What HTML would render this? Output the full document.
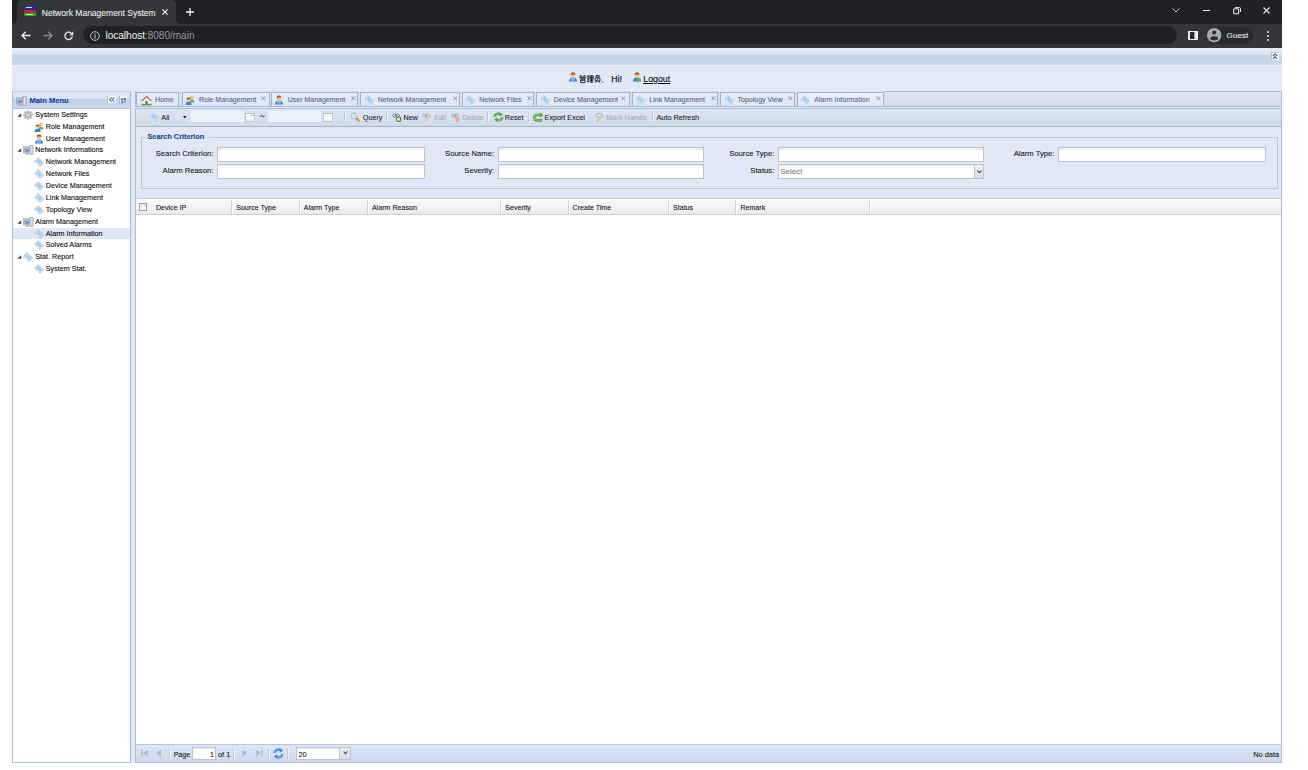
<!DOCTYPE html>
<html><head><meta charset="utf-8">
<style>
*{box-sizing:border-box}
html,body{margin:0;padding:0;background:#fff;width:1308px;height:770px;overflow:hidden;font-family:"Liberation Sans",sans-serif}
.a{position:absolute}
.t{position:absolute;white-space:nowrap;line-height:10px;height:10px;-webkit-text-stroke:0.08px currentColor}
svg{position:absolute;overflow:visible}
</style></head>
<body>
<svg width="0" height="0" style="position:absolute"><defs>
<g id="i-tag"><path d="M0.7 4.2L4.2 0.7L9.5 6L6 9.5Z" fill="#c4e2f8" stroke="#b9c5d4" stroke-width="1" stroke-linejoin="round"/><path d="M2.6 4.4L4.4 2.6L7.6 5.8L5.8 7.6Z" fill="#9ccdf0"/><path d="M2.2 5.2L5 8" stroke="#ffffff" stroke-width="0.8"/></g>
<g id="i-user"><path d="M1 9.5C1 6.8 2.6 5.6 5 5.6C7.4 5.6 9 6.8 9 9.5Z" fill="#3f7fd6"/><rect x="3" y="6" width="4" height="2.6" fill="#7fb3ea"/><circle cx="5" cy="3.2" r="2.3" fill="#f1c39b"/><path d="M2.6 3.1C2.6 1.2 3.6 0.6 5 0.6C6.4 0.6 7.4 1.2 7.4 3.1C6.6 2.4 3.4 2.4 2.6 3.1Z" fill="#b5521f"/></g>
<g id="i-role"><circle cx="6.8" cy="2.4" r="1.8" fill="#e8c07a"/><path d="M4.5 7.5C4.5 5.4 5.5 4.6 6.8 4.6C8.1 4.6 9.4 5.4 9.4 7.5Z" fill="#5db547"/><path d="M0.6 10C0.6 7.5 1.8 6.6 3.6 6.6C5.4 6.6 6.6 7.5 6.6 10Z" fill="#3f7fd6"/><circle cx="3.6" cy="4.8" r="2" fill="#f1c39b"/><path d="M1.6 4.7C1.6 3.2 2.4 2.6 3.6 2.6C4.8 2.6 5.6 3.2 5.6 4.7C4.9 4.1 2.3 4.1 1.6 4.7Z" fill="#8a5a2a"/></g>
<g id="i-pc"><rect x="0.5" y="1.8" width="7" height="6" fill="#d3d6db" stroke="#9da3ab" stroke-width="0.7"/><rect x="1.5" y="2.8" width="5" height="4" fill="#7594cc"/><rect x="1.5" y="2.8" width="5" height="1.2" fill="#a9c4ee"/><rect x="7" y="0.6" width="3" height="9" fill="#e2e4e7" stroke="#8f969e" stroke-width="0.7"/><rect x="2.4" y="8" width="3.4" height="1.6" fill="#a4aab2"/></g>
<g id="i-gear"><rect x="4.1" y="0.3" width="1.8" height="2.4" fill="#aeb2b8" transform="rotate(0 5 5)"/><rect x="4.1" y="0.3" width="1.8" height="2.4" fill="#aeb2b8" transform="rotate(45 5 5)"/><rect x="4.1" y="0.3" width="1.8" height="2.4" fill="#aeb2b8" transform="rotate(90 5 5)"/><rect x="4.1" y="0.3" width="1.8" height="2.4" fill="#aeb2b8" transform="rotate(135 5 5)"/><rect x="4.1" y="0.3" width="1.8" height="2.4" fill="#aeb2b8" transform="rotate(180 5 5)"/><rect x="4.1" y="0.3" width="1.8" height="2.4" fill="#aeb2b8" transform="rotate(225 5 5)"/><rect x="4.1" y="0.3" width="1.8" height="2.4" fill="#aeb2b8" transform="rotate(270 5 5)"/><rect x="4.1" y="0.3" width="1.8" height="2.4" fill="#aeb2b8" transform="rotate(315 5 5)"/><circle cx="5" cy="5" r="3.3" fill="#bfc3c8" stroke="#9ea3a9" stroke-width="0.5"/><circle cx="5" cy="5" r="1.5" fill="#f2f3f4" stroke="#9ea3a9" stroke-width="0.4"/></g>
<g id="i-home"><path d="M0.4 5.4L5.5 0.6L10.6 5.4L9.4 6.2L5.5 2.6L1.6 6.2Z" fill="#b3764a"/><path d="M2.4 5.6L5.5 2.8L8.6 5.6V9.4H2.4Z" fill="#faf6f0"/><rect x="4.3" y="6" width="2.4" height="3.4" fill="#707070"/><rect x="0.6" y="8.8" width="9.8" height="1.5" fill="#4a9e38"/></g>
<g id="i-role2"><path d="M1 9.5C1 6.8 2.6 5.6 5 5.6C7.4 5.6 9 6.8 9 9.5Z" fill="#3f7fd6"/><path d="M5 5.6C7.4 5.6 9.4 6.8 9.4 9.5H5Z" fill="#5db547"/><circle cx="5" cy="3.2" r="2.3" fill="#f1c39b"/><path d="M2.6 3.1C2.6 1.2 3.6 0.6 5 0.6C6.4 0.6 7.4 1.2 7.4 3.1C6.6 2.4 3.4 2.4 2.6 3.1Z" fill="#9a4a1a"/></g>
<g id="i-query"><circle cx="4" cy="4" r="3" fill="#cfe6fa" stroke="#9db4cc" stroke-width="0.8"/><path d="M6 6L9.4 9.2" stroke="#d98a3a" stroke-width="2"/></g>
<g id="i-new"><ellipse cx="2.6" cy="3.6" rx="2" ry="1.5" fill="none" stroke="#6b6f75" stroke-width="0.9"/><ellipse cx="5.4" cy="3.6" rx="2" ry="1.5" fill="none" stroke="#6b6f75" stroke-width="0.9"/><circle cx="6.6" cy="7.2" r="2.2" fill="#e8f6e0" stroke="#3f8f2e" stroke-width="1.2"/></g>
<g id="i-edit" opacity="0.5"><ellipse cx="2.6" cy="3.6" rx="2" ry="1.5" fill="none" stroke="#6b6f75" stroke-width="0.9"/><ellipse cx="5.4" cy="3.6" rx="2" ry="1.5" fill="none" stroke="#6b6f75" stroke-width="0.9"/><path d="M3 9.4L8.8 3.4" stroke="#e2c43c" stroke-width="2"/></g>
<g id="i-del" opacity="0.6"><ellipse cx="2.6" cy="3.6" rx="2" ry="1.5" fill="none" stroke="#6b6f75" stroke-width="0.9"/><ellipse cx="5.4" cy="3.6" rx="2" ry="1.5" fill="none" stroke="#6b6f75" stroke-width="0.9"/><circle cx="6.4" cy="7.4" r="2.2" fill="#f0884a"/></g>
<g id="i-reset"><path d="M1.4 4.8C1.8 2.2 4.6 1 7.6 2.4" stroke="#3f8a2e" stroke-width="2.4" fill="none"/><path d="M1.4 4.8C1.8 2.2 4.6 1 7.6 2.4" stroke="#8cc870" stroke-width="1.2" fill="none"/><path d="M6.4 0.2L9.8 2.6L6.6 4.6Z" fill="#5aa43e"/><path d="M9.4 5.4C9 8 6.2 9.2 3.2 7.8" stroke="#3f8a2e" stroke-width="2.4" fill="none"/><path d="M9.4 5.4C9 8 6.2 9.2 3.2 7.8" stroke="#8cc870" stroke-width="1.2" fill="none"/><path d="M4.4 10L1 7.6L4.2 5.6Z" fill="#5aa43e"/></g>
<g id="i-export"><path d="M8.6 3H4A2.6 2.6 0 0 0 4 8.2H9.4" stroke="#3f8a2e" stroke-width="2.6" fill="none"/><path d="M8.6 3H4A2.6 2.6 0 0 0 4 8.2H9.4" stroke="#8cc870" stroke-width="1.3" fill="none"/><path d="M6.8 0.2L10.4 3L6.8 5.6Z" fill="#5aa43e"/></g>
<g id="i-mark" opacity="0.5"><ellipse cx="4.4" cy="3.4" rx="3.6" ry="2" fill="none" stroke="#7a7a7a" stroke-width="0.9"/><path d="M1.6 9.4L8 4" stroke="#d8b830" stroke-width="2"/></g>
<g id="i-refresh"><path d="M1.6 5C1.8 2.4 4.6 0.8 7.8 2.2" stroke="#2f6fcf" stroke-width="2.2" fill="none"/><path d="M1.6 5C1.8 2.4 4.6 0.8 7.8 2.2" stroke="#8fc0f4" stroke-width="1" fill="none"/><path d="M6.6 0L10.2 2.4L7 4.6Z" fill="#3f86e0"/><path d="M9.4 6C9.2 8.6 6.4 10.2 3.2 8.8" stroke="#2f6fcf" stroke-width="2.2" fill="none"/><path d="M9.4 6C9.2 8.6 6.4 10.2 3.2 8.8" stroke="#8fc0f4" stroke-width="1" fill="none"/><path d="M4.4 11L0.8 8.6L4 6.4Z" fill="#3f86e0"/></g>
</defs></svg>
<!-- ============ BROWSER CHROME ============ -->
<div class="a" style="left:12px;top:0;width:1270px;height:24px;background:#202124"></div>
<!-- active tab -->
<div class="a" style="left:17px;top:0px;width:159px;height:24px;background:#35363a;border-radius:5px 5px 0 0"></div>
<div class="a" style="left:12px;top:16px;width:5px;height:8px;background:#35363a"></div>
<div class="a" style="left:12px;top:16px;width:5px;height:8px;background:#202124;border-radius:0 0 5px 0"></div>
<div class="a" style="left:176px;top:16px;width:5px;height:8px;background:#35363a"></div>
<div class="a" style="left:176px;top:16px;width:5px;height:8px;background:#202124;border-radius:0 0 0 5px"></div>
<!-- favicon -->
<div class="a" style="left:24px;top:6px;width:12px;height:3px;background:#2626c8"></div>
<div class="a" style="left:26px;top:7px;width:6px;height:1px;background:#d8d8ff"></div>
<div class="a" style="left:24px;top:9.5px;width:12px;height:3px;background:#c0202a"></div>
<div class="a" style="left:24px;top:13px;width:12px;height:3px;background:#1fa52e"></div>
<div class="a" style="left:26px;top:14px;width:7px;height:1px;background:#b8ffb8"></div>
<div class="t" style="left:41.8px;top:8.1px;font-size:8.5px;color:#eceef0">Network Management System</div>
<svg style="left:162.2px;top:9.2px" width="6" height="6"><path d="M0.4 0.4L5.6 5.6M5.6 0.4L0.4 5.6" stroke="#f0f1f3" stroke-width="1.2"/></svg>
<svg style="left:186px;top:8px" width="8" height="8"><path d="M4 0V8M0 4H8" stroke="#f4f5f6" stroke-width="1.3"/></svg>
<!-- window buttons -->
<svg style="left:1172px;top:8px" width="8" height="5"><path d="M0.5 0.5L4 4L7.5 0.5" stroke="#c8c9cc" stroke-width="0.9" fill="none"/></svg>
<div class="a" style="left:1203px;top:10px;width:7px;height:1.2px;background:#e8eaed"></div>
<svg style="left:1233px;top:7px" width="8" height="7"><rect x="0.7" y="1.7" width="5" height="5" rx="1" stroke="#e8eaed" stroke-width="1.1" fill="none"/><path d="M2 0.6H6.5a1 1 0 0 1 1 1V5" stroke="#e8eaed" stroke-width="1" fill="none"/></svg>
<svg style="left:1263px;top:7px" width="7" height="7"><path d="M0.5 0.5L6.5 6.5M6.5 0.5L0.5 6.5" stroke="#e8eaed" stroke-width="1.1"/></svg>

<!-- toolbar -->
<div class="a" style="left:12px;top:24px;width:1270px;height:24px;background:#35363a"></div>
<svg style="left:21px;top:31px" width="10" height="9"><path d="M9.5 4.5H1M4.8 0.7L1 4.5L4.8 8.3" stroke="#e8eaed" stroke-width="1.3" fill="none"/></svg>
<svg style="left:43px;top:31px" width="10" height="9"><path d="M0.5 4.5H9M5.2 0.7L9 4.5L5.2 8.3" stroke="#8a8b8e" stroke-width="1.3" fill="none"/></svg>
<svg style="left:64px;top:31px" width="10" height="10"><path d="M8.3 5.2A3.7 3.7 0 1 1 7.2 2.2" stroke="#e8eaed" stroke-width="1.4" fill="none"/><path d="M9.3 0.3V4.2H5.4Z" fill="#e8eaed"/></svg>
<div class="a" style="left:83px;top:26px;width:1094px;height:18px;background:#202124;border-radius:9px"></div>
<svg style="left:90px;top:30.5px" width="10" height="10"><circle cx="5" cy="5" r="4.3" stroke="#c4c6ca" stroke-width="1" fill="none"/><rect x="4.4" y="4.2" width="1.2" height="3.3" fill="#c4c6ca"/><rect x="4.4" y="2.4" width="1.2" height="1.1" fill="#c4c6ca"/></svg>
<div class="t" style="left:105.5px;top:30.5px;font-size:10px;color:#e8eaed">localhost<span style="color:#8f9297">:8080/main</span></div>
<!-- right toolbar icons -->
<div class="a" style="left:1188px;top:30.9px;width:9.8px;height:9.1px;border:solid #eceef0;border-width:1.2px 3.3px 1.3px 2px;background:#2a2b2e"></div>
<div class="a" style="left:1194.2px;top:32px;width:0.6px;height:7px;background:#9a9b9e"></div>
<div class="a" style="left:1210px;top:27px;width:43px;height:17px;background:#292a2d;border-radius:0 8px 8px 0"></div>
<svg style="left:1206.8px;top:28px" width="15" height="15"><circle cx="7.2" cy="7.2" r="7.2" fill="#a8aaad"/><circle cx="7.2" cy="4.4" r="2" fill="#2a2b2e"/><ellipse cx="7.2" cy="10.2" rx="3.9" ry="2" fill="#2a2b2e"/></svg>
<div class="t" style="left:1226.6px;top:31px;font-size:8.1px;color:#e8eaed">Guest</div>
<div class="a" style="left:1267px;top:31px;width:2px;height:2px;background:#e8eaed;border-radius:1px"></div>
<div class="a" style="left:1267px;top:35px;width:2px;height:2px;background:#e8eaed;border-radius:1px"></div>
<div class="a" style="left:1267px;top:39px;width:2px;height:2px;background:#e8eaed;border-radius:1px"></div>

<!-- ============ PAGE ============ -->
<div id="page" class="a" style="left:12px;top:48px;width:1270px;height:715px;background:#e2e8f5;overflow:hidden"></div>
<!-- north collapsed header band -->
<div class="a" style="left:12px;top:48px;width:1270px;height:7px;background:linear-gradient(#e6edf7,#d6e1f1)"></div>
<div class="a" style="left:12px;top:55px;width:1270px;height:10px;background:linear-gradient(#c2d2e8,#c9d8ec)"></div>
<div class="a" style="left:12px;top:65px;width:1270px;height:1px;background:#e9eff8"></div>
<div class="a" style="left:1270.5px;top:52px;width:8.5px;height:8px;background:#f2f6fc;border-left:1px solid #aebfd8;border-top:1px solid #b9cbe3"></div>
<svg style="left:1272px;top:53.2px" width="6" height="7"><path d="M0.8 3L3 1L5.2 3M0.8 5.8L3 3.8L5.2 5.8" stroke="#56637a" stroke-width="1.1" fill="none"/></svg>
<!-- user greeting -->
<svg style="left:567.5px;top:71.5px" width="10" height="11"><use href="#i-user"/></svg>
<svg style="left:579px;top:74.5px" width="28" height="8" viewBox="0 0 28 8"><g fill="none" stroke="#262626" stroke-width="0.95">
<path d="M0.8 1.6L2 0.3M0.8 1H3.2M4.4 1.6L5.6 0.3M4.4 1H6.8"/><path d="M0.6 3.2V2.3H6.8V3.2"/><path d="M2 3.2H5.6V5H2ZM1.6 5H6V7.6H1.6Z"/>
<path d="M8 1H10.4M8 3.8H10.4M7.8 6.8L10.6 6M9.2 1V6.4"/><path d="M11 0.8H14.2V4.2H11ZM11 2.5H14.2M12.6 0.8V7.2M11 5.4H14.2M10.8 7.2H14.6"/>
<path d="M17 0.6H20.2V2.2H17Z"/><path d="M16.2 3H21V6H16.2Z"/><path d="M18.6 3.4V5.2L16.2 7.6M19 6.2L21.2 7.6"/>
<path d="M23.2 6.4L23.8 7.6"/></g></svg>
<div class="t" style="left:611.3px;top:73.6px;font-size:8.6px;color:#121e40;-webkit-text-stroke:0.25px #121e40">Hi!</div>
<svg style="left:632px;top:71.5px" width="10" height="11"><use href="#i-role2"/></svg>
<div class="t" style="left:643.3px;top:73.5px;font-size:8.8px;color:#000;text-decoration:underline">Logout</div>

<!-- ============ WEST PANEL ============ -->
<div class="a" style="left:12px;top:91px;width:119px;height:672px;border:1px solid #a8bdd9;border-top-color:#bfcde0;background:#fff"></div>
<div class="a" style="left:13px;top:92px;width:117px;height:17px;background:linear-gradient(#e0e9f6 0%,#d6e2f3 42%,#c0d1ea 46%,#c9d8ed 100%);border-bottom:1px solid #b6c5d8"></div>
<svg style="left:16px;top:95.8px" width="11" height="10"><use href="#i-pc"/></svg>
<div class="t" style="left:29.5px;top:95.5px;font-size:7.6px;font-weight:bold;color:#15428b">Main Menu</div>
<div class="a" style="left:107.2px;top:96px;width:8.7px;height:8px;background:#f5f9fe;border-left:1px solid #a9b9cf;border-bottom:1px solid #c3d1e3"></div>
<svg style="left:109px;top:97.2px" width="6" height="6"><path d="M2.8 0.4L0.6 2.6L2.8 4.8M5.4 0.4L3.2 2.6L5.4 4.8" stroke="#5a6f8e" stroke-width="1.1" fill="none"/></svg>
<div class="a" style="left:118.8px;top:96px;width:8.2px;height:8px;background:#f5f9fe;border-left:1px solid #a9b9cf;border-bottom:1px solid #c3d1e3"></div>
<svg style="left:120px;top:97px" width="7" height="7"><path d="M1.2 3.6V2.1H4.6" stroke="#5a6f8e" stroke-width="1.1" fill="none"/><path d="M4.2 0.2L6.6 2.1L4.2 4Z" fill="#5a6f8e"/><path d="M5.8 3.4V5H2.6" stroke="#5a6f8e" stroke-width="1.1" fill="none"/><path d="M3 3.1L0.6 5L3 6.9Z" fill="#5a6f8e"/></svg>
<svg style="left:16.5px;top:112.7px" width="5" height="4"><path d="M4.2 0.2V3.8H0.4Z" fill="#3d3d3d"/></svg>
<svg style="left:23.3px;top:109.7px" width="11" height="11"><use href="#i-gear"/></svg>
<div class="t" style="left:35.3px;top:109.7px;font-size:7.2px;color:#000">System Settings</div>
<svg style="left:34.2px;top:121.6px" width="11" height="11"><use href="#i-role"/></svg>
<div class="t" style="left:45.8px;top:121.6px;font-size:7.2px;color:#000">Role Management</div>
<svg style="left:34.2px;top:133.5px" width="11" height="11"><use href="#i-user"/></svg>
<div class="t" style="left:45.8px;top:133.5px;font-size:7.2px;color:#000">User Management</div>
<svg style="left:16.5px;top:148.3px" width="5" height="4"><path d="M4.2 0.2V3.8H0.4Z" fill="#3d3d3d"/></svg>
<svg style="left:23.3px;top:145.3px" width="11" height="11"><use href="#i-pc"/></svg>
<div class="t" style="left:35.3px;top:145.3px;font-size:7.2px;color:#000">Network Informations</div>
<svg style="left:34.2px;top:157.2px" width="11" height="11"><use href="#i-tag"/></svg>
<div class="t" style="left:45.8px;top:157.2px;font-size:7.2px;color:#000">Network Management</div>
<svg style="left:34.2px;top:169.1px" width="11" height="11"><use href="#i-tag"/></svg>
<div class="t" style="left:45.8px;top:169.1px;font-size:7.2px;color:#000">Network Files</div>
<svg style="left:34.2px;top:181.0px" width="11" height="11"><use href="#i-tag"/></svg>
<div class="t" style="left:45.8px;top:181.0px;font-size:7.2px;color:#000">Device Management</div>
<svg style="left:34.2px;top:192.9px" width="11" height="11"><use href="#i-tag"/></svg>
<div class="t" style="left:45.8px;top:192.9px;font-size:7.2px;color:#000">Link Management</div>
<svg style="left:34.2px;top:204.7px" width="11" height="11"><use href="#i-tag"/></svg>
<div class="t" style="left:45.8px;top:204.7px;font-size:7.2px;color:#000">Topology View</div>
<svg style="left:16.5px;top:219.6px" width="5" height="4"><path d="M4.2 0.2V3.8H0.4Z" fill="#3d3d3d"/></svg>
<svg style="left:23.3px;top:216.6px" width="11" height="11"><use href="#i-pc"/></svg>
<div class="t" style="left:35.3px;top:216.6px;font-size:7.2px;color:#000">Alarm Management</div>
<div class="a" style="left:13px;top:228.3px;width:117px;height:11px;background:#dfe7f5"></div>
<svg style="left:34.2px;top:228.5px" width="11" height="11"><use href="#i-tag"/></svg>
<div class="t" style="left:45.8px;top:228.5px;font-size:7.2px;color:#000">Alarm Information</div>
<svg style="left:34.2px;top:240.4px" width="11" height="11"><use href="#i-tag"/></svg>
<div class="t" style="left:45.8px;top:240.4px;font-size:7.2px;color:#000">Solved Alarms</div>
<svg style="left:16.5px;top:255.3px" width="5" height="4"><path d="M4.2 0.2V3.8H0.4Z" fill="#3d3d3d"/></svg>
<svg style="left:23.3px;top:252.3px" width="11" height="11"><use href="#i-tag"/></svg>
<div class="t" style="left:35.3px;top:252.3px;font-size:7.2px;color:#000">Stat. Report</div>
<svg style="left:34.2px;top:264.1px" width="11" height="11"><use href="#i-tag"/></svg>
<div class="t" style="left:45.8px;top:264.1px;font-size:7.2px;color:#000">System Stat.</div>
<!-- ============ CENTER ============ -->
<div class="a" style="left:135px;top:91px;width:147px;height:671px"></div>
<div class="a" style="left:135px;top:91px;width:1147px;height:18px;background:linear-gradient(#dbe4f0,#d0dbea);border:1px solid #a8bdd9;border-top:none;border-bottom:none"></div><div class="a" style="left:884px;top:91px;width:398px;height:1px;background:#b3bfce"></div>
<div class="a" style="left:135px;top:106px;width:1147px;height:1px;background:#9fb8da"></div>
<div class="a" style="left:135px;top:107px;width:1147px;height:1px;background:#e6eef9"></div>
<div class="a" style="left:135px;top:108px;width:1147px;height:1px;background:#adbadb"></div>
<div class="a" style="left:136.4px;top:92.3px;width:43.1px;height:13.9px;background:linear-gradient(#e4ecf7,#dce6f4);border:1px solid #a4b6cf;border-top:1px solid #a9bbd4;border-bottom:none"></div>
<svg style="left:140.9px;top:94.5px" width="11" height="11"><use href="#i-home"/></svg>
<div class="t" style="left:154.9px;top:94.5px;font-size:7.0px;color:#52647e">Home</div>
<div class="a" style="left:181.5px;top:92.3px;width:88.5px;height:13.9px;background:linear-gradient(#e4ecf7,#dce6f4);border:1px solid #a4b6cf;border-top:1px solid #a9bbd4;border-bottom:none"></div>
<svg style="left:185.0px;top:94.5px" width="11" height="11"><use href="#i-role"/></svg>
<div class="t" style="left:199px;top:94.5px;font-size:7.0px;color:#52647e">Role Management</div>
<svg style="left:261.4px;top:95.5px" width="5" height="5"><path d="M0.6 0.6L4.2 4.2M4.2 0.6L0.6 4.2" stroke="#7e8999" stroke-width="1"/></svg>
<div class="a" style="left:271.0px;top:92.3px;width:87.4px;height:13.9px;background:linear-gradient(#e4ecf7,#dce6f4);border:1px solid #a4b6cf;border-top:1px solid #a9bbd4;border-bottom:none"></div>
<svg style="left:273.7px;top:94.5px" width="11" height="11"><use href="#i-user"/></svg>
<div class="t" style="left:287.7px;top:94.5px;font-size:7.0px;color:#52647e">User Management</div>
<svg style="left:350.7px;top:95.5px" width="5" height="5"><path d="M0.6 0.6L4.2 4.2M4.2 0.6L0.6 4.2" stroke="#7e8999" stroke-width="1"/></svg>
<div class="a" style="left:360.4px;top:92.3px;width:100.0px;height:13.9px;background:linear-gradient(#e4ecf7,#dce6f4);border:1px solid #a4b6cf;border-top:1px solid #a9bbd4;border-bottom:none"></div>
<svg style="left:363.8px;top:94.5px" width="11" height="11"><use href="#i-tag"/></svg>
<div class="t" style="left:377.8px;top:94.5px;font-size:7.0px;color:#52647e">Network Management</div>
<svg style="left:452.7px;top:95.5px" width="5" height="5"><path d="M0.6 0.6L4.2 4.2M4.2 0.6L0.6 4.2" stroke="#7e8999" stroke-width="1"/></svg>
<div class="a" style="left:462.4px;top:92.3px;width:71.8px;height:13.9px;background:linear-gradient(#e4ecf7,#dce6f4);border:1px solid #a4b6cf;border-top:1px solid #a9bbd4;border-bottom:none"></div>
<svg style="left:465.2px;top:94.5px" width="11" height="11"><use href="#i-tag"/></svg>
<div class="t" style="left:479.2px;top:94.5px;font-size:7.0px;color:#52647e">Network Files</div>
<svg style="left:527.4px;top:95.5px" width="5" height="5"><path d="M0.6 0.6L4.2 4.2M4.2 0.6L0.6 4.2" stroke="#7e8999" stroke-width="1"/></svg>
<div class="a" style="left:536.0px;top:92.3px;width:94.2px;height:13.9px;background:linear-gradient(#e4ecf7,#dce6f4);border:1px solid #a4b6cf;border-top:1px solid #a9bbd4;border-bottom:none"></div>
<svg style="left:539.7px;top:94.5px" width="11" height="11"><use href="#i-tag"/></svg>
<div class="t" style="left:553.7px;top:94.5px;font-size:7.0px;color:#52647e">Device Management</div>
<svg style="left:621.4px;top:95.5px" width="5" height="5"><path d="M0.6 0.6L4.2 4.2M4.2 0.6L0.6 4.2" stroke="#7e8999" stroke-width="1"/></svg>
<div class="a" style="left:632.1px;top:92.3px;width:85.7px;height:13.9px;background:linear-gradient(#e4ecf7,#dce6f4);border:1px solid #a4b6cf;border-top:1px solid #a9bbd4;border-bottom:none"></div>
<svg style="left:635.3px;top:94.5px" width="11" height="11"><use href="#i-tag"/></svg>
<div class="t" style="left:649.3px;top:94.5px;font-size:7.0px;color:#52647e">Link Management</div>
<svg style="left:710.7px;top:95.5px" width="5" height="5"><path d="M0.6 0.6L4.2 4.2M4.2 0.6L0.6 4.2" stroke="#7e8999" stroke-width="1"/></svg>
<div class="a" style="left:720.0px;top:92.3px;width:74.9px;height:13.9px;background:linear-gradient(#e4ecf7,#dce6f4);border:1px solid #a4b6cf;border-top:1px solid #a9bbd4;border-bottom:none"></div>
<svg style="left:723.5px;top:94.5px" width="11" height="11"><use href="#i-tag"/></svg>
<div class="t" style="left:737.5px;top:94.5px;font-size:7.0px;color:#52647e">Topology View</div>
<svg style="left:788.0px;top:95.5px" width="5" height="5"><path d="M0.6 0.6L4.2 4.2M4.2 0.6L0.6 4.2" stroke="#7e8999" stroke-width="1"/></svg>
<div class="a" style="left:797.2px;top:92.3px;width:87.2px;height:13.9px;background:linear-gradient(#eaf1fb,#dfe9f7);border:1px solid #a4b6cf;border-top:1px solid #97b2d8;border-bottom:none"></div>
<svg style="left:800.3px;top:94.5px" width="11" height="11"><use href="#i-tag"/></svg>
<div class="t" style="left:814.3px;top:94.5px;font-size:7.0px;color:#52647e">Alarm Information</div>
<svg style="left:876.4px;top:95.5px" width="5" height="5"><path d="M0.6 0.6L4.2 4.2M4.2 0.6L0.6 4.2" stroke="#7e8999" stroke-width="1"/></svg>
<div class="a" style="left:135px;top:109px;width:1147px;height:18px;background:linear-gradient(#dce6f3,#d0dcea);border-left:1px solid #a8bdd9;border-right:1px solid #a8bdd9;border-bottom:1px solid #aab5c4"></div>
<svg style="left:148.5px;top:111.8px" width="11" height="11"><use href="#i-tag"/></svg>
<div class="t" style="left:161.3px;top:112.8px;font-size:7.4px;color:#222">All</div>
<svg style="left:183px;top:116px" width="4" height="3"><path d="M0 0H3.6L1.8 2.4Z" fill="#222"/></svg>
<div class="a" style="left:190.8px;top:110.8px;width:53.5px;height:11px;background:#edf2f9"></div>
<div class="a" style="left:245.3px;top:112.6px;width:10px;height:9px;background:linear-gradient(#f8f9fb 60%,#e4efe4);border:1px solid #c4c8cf;border-top:1.5px solid #b8bdc5"></div>
<div class="a" style="left:267.8px;top:110.8px;width:53.7px;height:11px;background:#edf2f9"></div>
<div class="a" style="left:322.5px;top:112.6px;width:10px;height:9px;background:linear-gradient(#f8f9fb 60%,#e4efe4);border:1px solid #c4c8cf;border-top:1.5px solid #b8bdc5"></div>
<div class="a" style="left:251px;top:114.8px;width:0.8px;height:1.6px;background:#d57a84"></div><div class="a" style="left:253px;top:114.8px;width:0.8px;height:1.6px;background:#d57a84"></div>
<svg style="left:260px;top:114.5px" width="5" height="3"><path d="M0.3 1.6C1 0.4 1.8 0.4 2.5 1.2C3.2 2 4 2 4.7 0.8" stroke="#222" stroke-width="1" fill="none"/></svg>
<div class="a" style="left:344.1px;top:112px;width:1px;height:10px;background:#b9c8dc"></div><div class="a" style="left:345.1px;top:112px;width:1px;height:10px;background:#f2f6fb"></div>
<div class="a" style="left:386.3px;top:112px;width:1px;height:10px;background:#b9c8dc"></div><div class="a" style="left:387.3px;top:112px;width:1px;height:10px;background:#f2f6fb"></div>
<div class="a" style="left:487.1px;top:112px;width:1px;height:10px;background:#b9c8dc"></div><div class="a" style="left:488.1px;top:112px;width:1px;height:10px;background:#f2f6fb"></div>
<div class="a" style="left:527.5px;top:112px;width:1px;height:10px;background:#b9c8dc"></div><div class="a" style="left:528.5px;top:112px;width:1px;height:10px;background:#f2f6fb"></div>
<div class="a" style="left:652.0px;top:112px;width:1px;height:10px;background:#b9c8dc"></div><div class="a" style="left:653.0px;top:112px;width:1px;height:10px;background:#f2f6fb"></div>
<svg style="left:350px;top:112px" width="11" height="10"><use href="#i-query"/></svg>
<div class="t" style="left:362.8px;top:112.8px;font-size:7.2px;color:#1a1a1a">Query</div>
<svg style="left:392px;top:112px" width="11" height="10"><use href="#i-new"/></svg>
<div class="t" style="left:403.6px;top:112.8px;font-size:7.2px;color:#1a1a1a">New</div>
<svg style="left:422px;top:112px" width="11" height="10"><use href="#i-edit"/></svg>
<div class="t" style="left:434px;top:112.8px;font-size:7.2px;color:#a3acb8">Edit</div>
<svg style="left:451px;top:112px" width="11" height="10"><use href="#i-del"/></svg>
<div class="t" style="left:462.5px;top:112.8px;font-size:7.2px;color:#a3acb8">Delete</div>
<svg style="left:492.5px;top:112px" width="11" height="10"><use href="#i-reset"/></svg>
<div class="t" style="left:504.8px;top:112.8px;font-size:7.2px;color:#1a1a1a">Reset</div>
<svg style="left:533px;top:112px" width="11" height="10"><use href="#i-export"/></svg>
<div class="t" style="left:544.6px;top:112.8px;font-size:7.2px;color:#1a1a1a">Export Excel</div>
<svg style="left:595px;top:112px" width="11" height="10"><use href="#i-mark"/></svg>
<div class="t" style="left:606.6px;top:112.8px;font-size:7.2px;color:#a3acb8">Mark Handle</div>
<div class="t" style="left:656.5px;top:112.8px;font-size:7.3px;color:#1a1a1a">Auto Refresh</div>
<div class="a" style="left:135px;top:127px;width:1147px;height:72px;background:#e1e7f5;border-left:1px solid #a8bdd9;border-right:1px solid #a8bdd9"></div>
<div class="a" style="left:140.5px;top:136.5px;width:1137px;height:52px;border:1px solid #bfc7d6"></div>
<div class="a" style="left:145px;top:132px;width:64px;height:9px;background:#e1e7f5"></div>
<div class="t" style="left:147.5px;top:131.5px;font-size:7.3px;font-weight:bold;color:#15428b">Search Criterion</div>
<div class="t" style="left:93.4px;width:120px;text-align:right;top:149.4px;font-size:7.7px;color:#111">Search Criterion:</div>
<div class="a" style="left:217px;top:147.3px;width:207.5px;height:14.3px;background:#fff linear-gradient(#e9ecef,#fff 3px);border:1px solid #bfc3cc"></div>
<div class="t" style="left:374.2px;width:120px;text-align:right;top:149.4px;font-size:7.7px;color:#111">Source Name:</div>
<div class="a" style="left:497.7px;top:147.3px;width:206.7px;height:14.3px;background:#fff linear-gradient(#e9ecef,#fff 3px);border:1px solid #bfc3cc"></div>
<div class="t" style="left:654.3px;width:120px;text-align:right;top:149.4px;font-size:7.7px;color:#111">Source Type:</div>
<div class="a" style="left:778.2px;top:147.3px;width:206.3px;height:14.3px;background:#fff linear-gradient(#e9ecef,#fff 3px);border:1px solid #bfc3cc"></div>
<div class="t" style="left:934.5px;width:120px;text-align:right;top:149.4px;font-size:7.7px;color:#111">Alarm Type:</div>
<div class="a" style="left:1058.2px;top:147.3px;width:207.4px;height:14.3px;background:#fff linear-gradient(#e9ecef,#fff 3px);border:1px solid #bfc3cc"></div>
<div class="t" style="left:93.4px;width:120px;text-align:right;top:166.1px;font-size:7.7px;color:#111">Alarm Reason:</div>
<div class="a" style="left:217px;top:164.3px;width:207.5px;height:14.3px;background:#fff linear-gradient(#e9ecef,#fff 3px);border:1px solid #bfc3cc"></div>
<div class="t" style="left:374.2px;width:120px;text-align:right;top:166.1px;font-size:7.7px;color:#111">Severity:</div>
<div class="a" style="left:497.7px;top:164.3px;width:206.7px;height:14.3px;background:#fff linear-gradient(#e9ecef,#fff 3px);border:1px solid #bfc3cc"></div>
<div class="t" style="left:654.3px;width:120px;text-align:right;top:166.1px;font-size:7.7px;color:#111">Status:</div>
<div class="a" style="left:778.2px;top:164.3px;width:206.3px;height:14.3px;background:#fff linear-gradient(#e9ecef,#fff 3px);border:1px solid #bfc3cc"></div>
<div class="t" style="left:780.2px;top:166.6px;font-size:8px;color:#7d7d7d">Select</div>
<div class="a" style="left:973.6px;top:164.3px;width:10.9px;height:14.3px;background:linear-gradient(#eef0f3,#d7dade);border:1px solid #bfc3cc"></div>
<svg style="left:976.6px;top:169.5px" width="5" height="4"><path d="M0.5 0.5L2.5 2.7L4.5 0.5" stroke="#3a3f6a" stroke-width="1.1" fill="none"/></svg>
<div class="a" style="left:135px;top:198.5px;width:1147px;height:546px;background:#fff;border:1px solid #a8bdd9;border-top:none;border-bottom:none"></div>
<div class="a" style="left:136px;top:198px;width:1145px;height:16.5px;background:linear-gradient(#fbfbfb,#f3f3f3 50%,#e9e9ea);border-top:1px solid #c9cfdb;border-bottom:1px solid #d0d0d0"></div>
<div class="a" style="left:139.3px;top:203.3px;width:8px;height:8px;background:linear-gradient(#e6e6e6,#fafafa);border:1px solid #9aa0a8"></div>
<div class="t" style="left:155.9px;top:202.5px;font-size:7.1px;color:#111">Device IP</div>
<div class="t" style="left:236.2px;top:202.5px;font-size:7.1px;color:#111">Source Type</div>
<div class="t" style="left:303.7px;top:202.5px;font-size:7.1px;color:#111">Alarm Type</div>
<div class="t" style="left:371.9px;top:202.5px;font-size:7.1px;color:#111">Alarm Reason</div>
<div class="t" style="left:505.3px;top:202.5px;font-size:7.1px;color:#111">Severity</div>
<div class="t" style="left:572.6px;top:202.5px;font-size:7.1px;color:#111">Create Time</div>
<div class="t" style="left:673px;top:202.5px;font-size:7.1px;color:#111">Status</div>
<div class="t" style="left:740.4px;top:202.5px;font-size:7.1px;color:#111">Remark</div>
<div class="a" style="left:230.9px;top:199.5px;width:1px;height:14px;background:#d4d4d4"></div><div class="a" style="left:231.9px;top:199.5px;width:1px;height:14px;background:#fdfdfd"></div>
<div class="a" style="left:298.8px;top:199.5px;width:1px;height:14px;background:#d4d4d4"></div><div class="a" style="left:299.8px;top:199.5px;width:1px;height:14px;background:#fdfdfd"></div>
<div class="a" style="left:366.8px;top:199.5px;width:1px;height:14px;background:#d4d4d4"></div><div class="a" style="left:367.8px;top:199.5px;width:1px;height:14px;background:#fdfdfd"></div>
<div class="a" style="left:500.0px;top:199.5px;width:1px;height:14px;background:#d4d4d4"></div><div class="a" style="left:501.0px;top:199.5px;width:1px;height:14px;background:#fdfdfd"></div>
<div class="a" style="left:567.9px;top:199.5px;width:1px;height:14px;background:#d4d4d4"></div><div class="a" style="left:568.9px;top:199.5px;width:1px;height:14px;background:#fdfdfd"></div>
<div class="a" style="left:667.8px;top:199.5px;width:1px;height:14px;background:#d4d4d4"></div><div class="a" style="left:668.8px;top:199.5px;width:1px;height:14px;background:#fdfdfd"></div>
<div class="a" style="left:734.8px;top:199.5px;width:1px;height:14px;background:#d4d4d4"></div><div class="a" style="left:735.8px;top:199.5px;width:1px;height:14px;background:#fdfdfd"></div>
<div class="a" style="left:869.0px;top:199.5px;width:1px;height:14px;background:#d4d4d4"></div><div class="a" style="left:870.0px;top:199.5px;width:1px;height:14px;background:#fdfdfd"></div>
<div class="a" style="left:135px;top:744px;width:1147px;height:19px;background:linear-gradient(#dde6f2,#cddaec);border:1px solid #a8bdd9;border-top:1px solid #b4c8e2"></div>
<svg style="left:141px;top:749px" width="8" height="8"><path d="M0.8 0.5V7.5" stroke="#b3bcc8" stroke-width="1.4"/><path d="M7 0.5V7.5L2.2 4Z" fill="#b3bcc8"/></svg>
<svg style="left:156px;top:749px" width="6" height="8"><path d="M5 0.5V7.5L0.6 4Z" fill="#b3bcc8"/></svg>
<svg style="left:242px;top:749px" width="6" height="8"><path d="M0.6 0.5V7.5L5 4Z" fill="#b3bcc8"/></svg>
<svg style="left:254.5px;top:749px" width="8" height="8"><path d="M0.8 0.5V7.5L5.6 4Z" fill="#b3bcc8"/><path d="M7 0.5V7.5" stroke="#b3bcc8" stroke-width="1.4"/></svg>
<div class="a" style="left:168.5px;top:748px;width:1px;height:11px;background:#bccadd"></div><div class="a" style="left:169.5px;top:748px;width:1px;height:11px;background:#f2f6fb"></div>
<div class="a" style="left:233.4px;top:748px;width:1px;height:11px;background:#bccadd"></div><div class="a" style="left:234.4px;top:748px;width:1px;height:11px;background:#f2f6fb"></div>
<div class="a" style="left:267.8px;top:748px;width:1px;height:11px;background:#bccadd"></div><div class="a" style="left:268.8px;top:748px;width:1px;height:11px;background:#f2f6fb"></div>
<div class="a" style="left:287.0px;top:748px;width:1px;height:11px;background:#bccadd"></div><div class="a" style="left:288.0px;top:748px;width:1px;height:11px;background:#f2f6fb"></div>
<div class="t" style="left:173.7px;top:749.5px;font-size:7.0px;color:#111">Page</div>
<div class="a" style="left:192px;top:747.4px;width:24.4px;height:12.4px;background:#fff linear-gradient(#e9ecef,#fff 3px);border:1px solid #bfc3cc"></div>
<div class="t" style="left:192px;width:22.2px;text-align:right;top:749.5px;font-size:7.4px;color:#111">1</div>
<div class="t" style="left:218px;top:749.5px;font-size:7.4px;color:#111">of 1</div>
<svg style="left:272.5px;top:748px" width="11" height="11"><use href="#i-refresh"/></svg>
<div class="a" style="left:295.7px;top:747.4px;width:55px;height:12.4px;background:#fff linear-gradient(#e9ecef,#fff 3px);border:1px solid #bfc3cc"></div>
<div class="t" style="left:298.5px;top:749.5px;font-size:7.4px;color:#111">20</div>
<div class="a" style="left:339.4px;top:747.4px;width:11.4px;height:12.4px;background:linear-gradient(#eef0f3,#d7dade);border:1px solid #bfc3cc"></div>
<svg style="left:342.6px;top:751.4px" width="5" height="4"><path d="M0.5 0.5L2.5 2.7L4.5 0.5" stroke="#3a3f6a" stroke-width="1.1" fill="none"/></svg>
<div class="t" style="left:1253.2px;top:749.5px;font-size:7.4px;color:#111">No data</div>


</body></html>
